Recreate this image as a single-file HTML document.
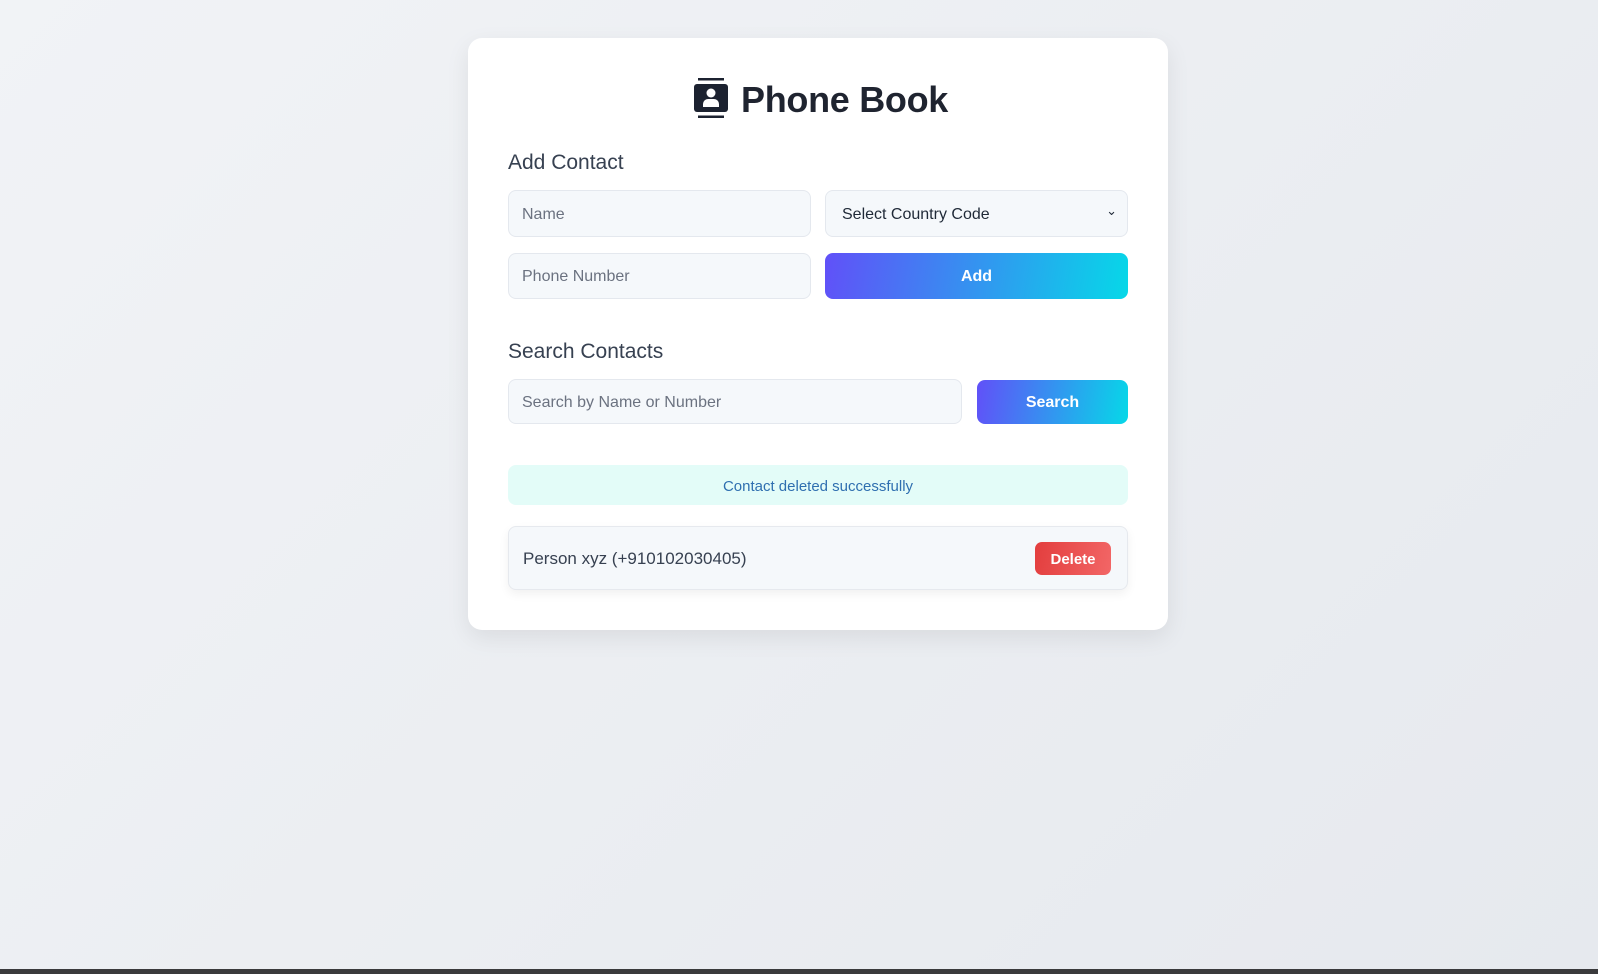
<!DOCTYPE html>
<html><head><meta charset="utf-8"><style>
*{box-sizing:border-box;margin:0;padding:0}
body{width:1598px;height:974px;overflow:hidden;background:linear-gradient(135deg,#f1f3f6,#e6e9ee);font-family:"Liberation Sans",sans-serif;position:relative}
.card{position:absolute;left:468px;top:38px;width:700px;height:592px;background:#fff;border-radius:14px;box-shadow:0 8px 24px rgba(0,0,0,.08)}
.abs{position:absolute}
h2{position:absolute;font-size:21px;font-weight:normal;color:#374151}
.inp{position:absolute;background:#f5f8fb;border:1.5px solid #e4e8ee;border-radius:8px;font-size:16px;color:#6b7280;padding-left:13px;padding-top:2px;display:flex;align-items:center}
.btn{position:absolute;border-radius:8px;background:linear-gradient(100deg,#6150f8,#06d8e8);color:#fff;font-weight:bold;font-size:16px;padding-top:2px;display:flex;align-items:center;justify-content:center}
</style></head><body>
<div class="card"></div>
<svg class="abs" style="left:694px;top:77px" width="36" height="42" viewBox="0 0 36 42">
<rect x="4" y="1" width="26" height="2.5" fill="#1c2230"/>
<rect x="0" y="7" width="34" height="28" rx="3" fill="#1c2230"/>
<rect x="4" y="38.5" width="26" height="2.5" fill="#1c2230"/>
<circle cx="17" cy="16" r="4.5" fill="#fff"/>
<path d="M9 30v-3a5 5 0 0 1 5-5h6a5 5 0 0 1 5 5v3z" fill="#fff"/>
</svg>
<div class="abs" style="left:741px;top:79px;font-size:36px;font-weight:bold;color:#1f2430;letter-spacing:-0.3px">Phone Book</div>
<h2 style="left:508px;top:151px">Add Contact</h2>
<div class="inp" style="left:508px;top:190px;width:303px;height:47px">Name</div>
<div class="inp" style="left:825px;top:190px;width:303px;height:47px;color:#1f2937;padding-left:16px">Select Country Code<span style="position:absolute;right:10px;top:12px;font-size:13px">&#x2304;</span></div>
<div class="inp" style="left:508px;top:253px;width:303px;height:46px">Phone Number</div>
<div class="btn" style="left:825px;top:253px;width:303px;height:46px">Add</div>
<h2 style="left:508px;top:340px">Search Contacts</h2>
<div class="inp" style="left:508px;top:379px;width:454px;height:45px">Search by Name or Number</div>
<div class="btn" style="left:977px;top:380px;width:151px;height:44px">Search</div>
<div class="abs" style="left:508px;top:465px;width:620px;height:40px;background:#e3fcf8;border-radius:8px;color:#2f6fb0;font-size:15px;padding-top:2px;display:flex;align-items:center;justify-content:center">Contact deleted successfully</div>
<div class="abs" style="left:508px;top:526px;width:620px;height:64px;background:#f5f8fb;border:1.5px solid #e6e9ee;border-radius:8px;box-shadow:0 4px 10px rgba(0,0,0,.06)"></div>
<div class="abs" style="left:523px;top:549px;font-size:17px;color:#374151">Person xyz (+910102030405)</div>
<div class="abs" style="left:1035px;top:542px;width:76px;height:33px;border-radius:7px;background:linear-gradient(100deg,#e33e3e,#f26666);color:#fff;font-weight:bold;font-size:15px;padding-top:1px;display:flex;align-items:center;justify-content:center">Delete</div>
<div class="abs" style="left:0;top:969px;width:1598px;height:5px;background:#3a3a3c"></div>
</body></html>
